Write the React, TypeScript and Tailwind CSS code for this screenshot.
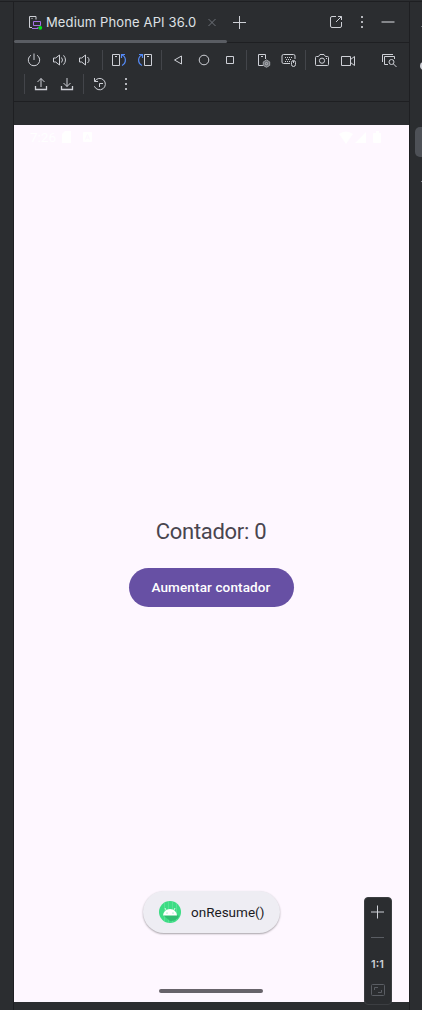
import type { ReactNode } from "react";

function Icon({ children, size = 16 }: { children: ReactNode; size?: number }) {
  return (
    <svg width={size} height={size} viewBox={`0 0 ${size} ${size}`} fill="none" stroke="#ced0d6" strokeWidth="1" className="block shrink-0">
      {children}
    </svg>
  );
}

function Tool({ children }: { children: ReactNode }) {
  return (
    <button className="flex h-6 w-[26px] shrink-0 items-center justify-center">
      <Icon>{children}</Icon>
    </button>
  );
}

function Separator() {
  return (
    <div className="flex h-6 w-[7px] shrink-0 items-center justify-center">
      <div className="h-5 w-px bg-[#43454a]" />
    </div>
  );
}

const dots = (
  <g fill="#b4b6bb" stroke="none">
    <rect x="7" y="2" width="2" height="2" />
    <rect x="7" y="7" width="2" height="2" />
    <rect x="7" y="12" width="2" height="2" />
  </g>
);

const speaker = "M1.500 6h2.200L7.500 3v10L3.700 10H1.500z";

function Header() {
  return (
    <div className="relative flex h-[41px] items-center border-b border-[#1e1f22]">
      <div className="flex h-full w-[213px] items-center pl-[13px]">
        <Icon>
          <path d="M5 13.500H2.500v-11h6.500v3M4.500 4.500h1" />
          <path d="M6.500 7.500h7v4h-7zM5 14.500h6v-1.500" stroke="#a571e6" />
          <circle cx="13.300" cy="13.800" r="1.900" fill="#00e51a" stroke="none" />
        </Icon>
        <span className="ml-[3px] w-[152px] whitespace-nowrap font-['Inter',sans-serif] text-[13px] leading-4 tracking-[0.13px] text-[#dfe1e5]">
          Medium Phone API 36.0
        </span>
        <span className="ml-[6px]">
          <Icon><path d="m4.500 5 7 7m0-7-7 7" stroke="#6f737a" /></Icon>
        </span>
      </div>
      <div className="ml-[4px] -mt-px">
        <Icon><path d="M8.500 2v13M2 8.500h13" /></Icon>
      </div>
      <div className="ml-auto flex items-center pr-2">
        <div className="flex w-[26px] justify-center">
          <Icon><path d="M8 2.500H4A1.500 1.500 0 0 0 2.500 4v8A1.500 1.500 0 0 0 4 13.500h8a1.500 1.500 0 0 0 1.500-1.500V8M10 2.500h3.500V6M13.500 2.500 8 8" /></Icon>
        </div>
        <div className="flex w-[26px] justify-center"><Icon>{dots}</Icon></div>
        <div className="flex w-[26px] justify-center"><Icon><path d="M1.500 8h13" stroke="#85878b" strokeWidth="2" /></Icon></div>
      </div>
      <div className="absolute -bottom-px left-0 h-[3px] w-[213px] rounded-full bg-[#5a5d63]" />
    </div>
  );
}

function Toolbar() {
  return (
    <div className="h-[59px] border-b border-[#1e1f22] pt-[5px]">
      <div className="flex h-6 items-center pl-[7px]">
        <Tool><path d="M5 3.200a5.700 5.700 0 1 0 6 0M8 1.500v6.500" /></Tool>
        <Tool><path d={speaker} /><path d="M9.500 5.500q2 2.500 0 5M11.500 3.300q4 4.700 0 9.400" /></Tool>
        <Tool><path d={speaker} /><path d="M9.500 5q3.200 3 0 6" /></Tool>
        <Separator />
        <Tool>
          <path d="M1.500 2.500h7v11h-7zM4 4.500h2" />
          <path d="M10.500 6V2.500H14M10.700 2.700c4.500 1.800 5.200 8 .3 10.800" stroke="#548af7" strokeWidth="1.200" />
        </Tool>
        <Tool>
          <path d="M7.500 2.500h7v11h-7zM10 4.500h2" />
          <path d="M5.500 6V2.500H2M5.300 2.700C.8 4.500.1 10.700 5 13.500" stroke="#548af7" strokeWidth="1.200" />
        </Tool>
        <Separator />
        <Tool><path d="M11.500 4v8L4.500 8z" /></Tool>
        <Tool><circle cx="8" cy="8" r="4.800" /></Tool>
        <Tool><path d="M4.500 4.500h7v7h-7z" /></Tool>
        <Separator />
        <Tool>
          <path d="M8 13.500H3.500v-11h7V7M6 4.500h2" />
          <path d="m11.500 8 3.200 1.900v3.500l-3.200 1.900-3.200-1.900V9.900z" fill="#6d7075" stroke="#a0a2a7" />
          <circle cx="11.500" cy="11.600" r="1.200" stroke="#b4b6bb" />
        </Tool>
        <Tool>
          <path d="M9 11.500H2.500A1.500 1.500 0 0 1 1 10V4a1.500 1.500 0 0 1 1.500-1.500h10A1.500 1.500 0 0 1 14 4v3" />
          <path d="M4 5.500h8M5 7.500h6M4 9.500h5" strokeDasharray="1 1" />
          <rect x="10.500" y="8.500" width="4" height="6" rx="2" /><path d="M12.500 9v2" />
        </Tool>
        <Separator />
        <Tool>
          <path d="M1.500 5.500q0-1 1-1h2l1.500-2h4l1.500 2h2q1 0 1 1v7q0 1-1 1h-11q-1 0-1-1z" />
          <circle cx="8" cy="8.700" r="2.600" /><path d="M12 6.500h1" />
        </Tool>
        <Tool><path d="M1.500 4.500h9v9h-9zM10.500 7.500l4-3v9l-4-3" /></Tool>
        <span className="ml-[15px] flex">
          <Tool>
            <path d="M1.500 10V2.500H12M7 12.500H3.500v-8h10V7" />
            <circle cx="10.500" cy="10" r="2.500" /><path d="m12.500 12 3 3" />
          </Tool>
        </span>
      </div>
      <div className="flex h-6 items-center pl-[7px]">
        <Separator />
        <Tool><path d="M2.500 10v3.500h11V10" strokeWidth="1.300" /><path d="M8 11V2.500M4.500 6 8 2.500 11.500 6" /></Tool>
        <Tool><path d="M2.500 10v3.500h11V10" strokeWidth="1.300" /><path d="M8 2v8.500M4.500 7 8 10.500 11.500 7" /></Tool>
        <Separator />
        <Tool><path d="M2.500 2v3.500H6M2.700 5.300a5.700 5.700 0 1 1-.3 5M7.500 11V7.500H11" /></Tool>
        <Tool>{dots}</Tool>
      </div>
    </div>
  );
}

function StatusBar() {
  return (
    <div className="flex h-6 items-center justify-between pl-4 pr-6 font-['Roboto',sans-serif] text-[13.500px] text-white">
      <div className="flex items-center">
        <span className="w-[31px] leading-4">7:26</span>
        <svg width="34" height="12" viewBox="0 0 34 12" fill="white">
          <path d="M4 0h6v12H1V3z" />
          <rect x="22" y="1" width="9" height="10" rx="1" />
          <path d="m24.500 8.500 2-5 2 5m-3.200-1.500h2.400" fill="none" stroke="#fef7ff" />
        </svg>
      </div>
      <svg width="46" height="13" viewBox="0 0 46 13" fill="white" className="mr-px block">
        <path d="M1 3q7-5 14 0L8 13zM17 12 28 1v11zM36 2h2V0h3v2h1.500q.5 0 .5 1v8q0 1-1 1h-6q-1 0-1-1V3q0-1 1-1z" />
      </svg>
    </div>
  );
}

function Toast() {
  return (
    <div className="flex h-[42px] w-[137px] items-center rounded-full bg-[#eeedf3] pl-4 shadow-[0_1px_2px_rgba(0,0,0,0.35)]">
      <svg width="22" height="22" viewBox="0 0 22 22" className="block">
        <circle cx="11" cy="11" r="11" fill="#3ddc84" />
        <path d="M5.500 1.500v19M9.500 0v22M13.500 0v22M17.500 2v18" stroke="#72e6a6" strokeWidth=".5" />
        <path d="m4 14 7 6q7 0 9-5l-2-1z" fill="#2fbc70" />
        <path d="M4 14.500a7 6.500 0 0 1 14 0z" fill="white" />
        <path d="m7.500 10-1.500-3m8.500 3 1.500-3" stroke="white" strokeWidth=".8" />
        <circle cx="8" cy="12" r=".5" fill="#3ddc84" /><circle cx="14" cy="12" r=".5" fill="#3ddc84" />
      </svg>
      <span className="ml-[10px] font-['Roboto',sans-serif] text-[13.500px] leading-5 text-[#1b1b1f]">onResume()</span>
    </div>
  );
}

function ZoomControls() {
  return (
    <div className="absolute bottom-[-3px] right-[17px] flex h-[108px] w-7 flex-col items-center rounded-[4px] border border-[#3c3e42] bg-[#2b2d30]">
      <div className="flex h-[27px] items-center"><Icon><path d="M7.500 1.500v13M1 8h13" /></Icon></div>
      <div className="flex h-[25px] items-center"><Icon><path d="M1 7.500h13" stroke="#5a5d63" /></Icon></div>
      <div className="mr-px flex h-7 items-center font-['Inter',sans-serif] text-[11px] font-semibold text-[#ced0d6]">1:1</div>
      <div className="flex h-6 items-center">
        <Icon>
          <g stroke="#5a5d63"><rect x="1.500" y="2.500" width="13" height="11" rx="1" /><path d="M4.500 8V5.500H8M11.500 8v2.500H8" /></g>
        </Icon>
      </div>
    </div>
  );
}

function DeviceScreen() {
  return (
    <div className="relative flex h-[877px] flex-col bg-[#fef7ff]">
      <StatusBar />
      <div className="mt-[367px] flex flex-col items-center pr-px">
        <div className="h-8 font-['Roboto',sans-serif] text-[22px] leading-8 tracking-[-0.3px] text-[#49454f]">Contador: 0</div>
        <button className="mt-5 h-[39px] w-[165px] rounded-full bg-[#6750a4] font-['Roboto',sans-serif] text-[13.500px] font-medium tracking-[0.13px] text-white">
          Aumentar contador
        </button>
      </div>
      <div className="mt-auto flex flex-col items-center pb-[9px]">
        <Toast />
        <div className="mr-px mt-[56px] h-1 w-[104px] rounded-full bg-[#67636a]" />
      </div>
      <ZoomControls />
    </div>
  );
}

export default function App() {
  return (
    <div className="flex h-[1010px] w-[422px] flex-col overflow-hidden bg-[#2b2d30]">
      <div className="mt-px h-px shrink-0 bg-[#1e1f22]" />
      <div className="flex min-h-0 flex-1">
        <div className="w-[14px] shrink-0 border-r border-[#1e1f22]" />
        <main className="w-[395px] shrink-0">
          <Header />
          <Toolbar />
          <div className="h-[23px]" />
          <DeviceScreen />
        </main>
        <aside className="relative flex-1 overflow-hidden border-l border-[#1e1f22]">
          <div className="absolute left-[5px] top-[125px] h-[30px] w-[30px] rounded-[5px] bg-[#4e5157]" />
          <div className="absolute left-[10px] top-[60px] h-[8px] w-2 rounded-full bg-[#ced0d6]" />
          <div className="absolute left-[11px] top-[24px] h-px w-2 bg-[#6f737a]" />
          <div className="absolute left-[11px] top-[179px] h-px w-2 bg-[#85888e]" />
        </aside>
      </div>
    </div>
  );
}
